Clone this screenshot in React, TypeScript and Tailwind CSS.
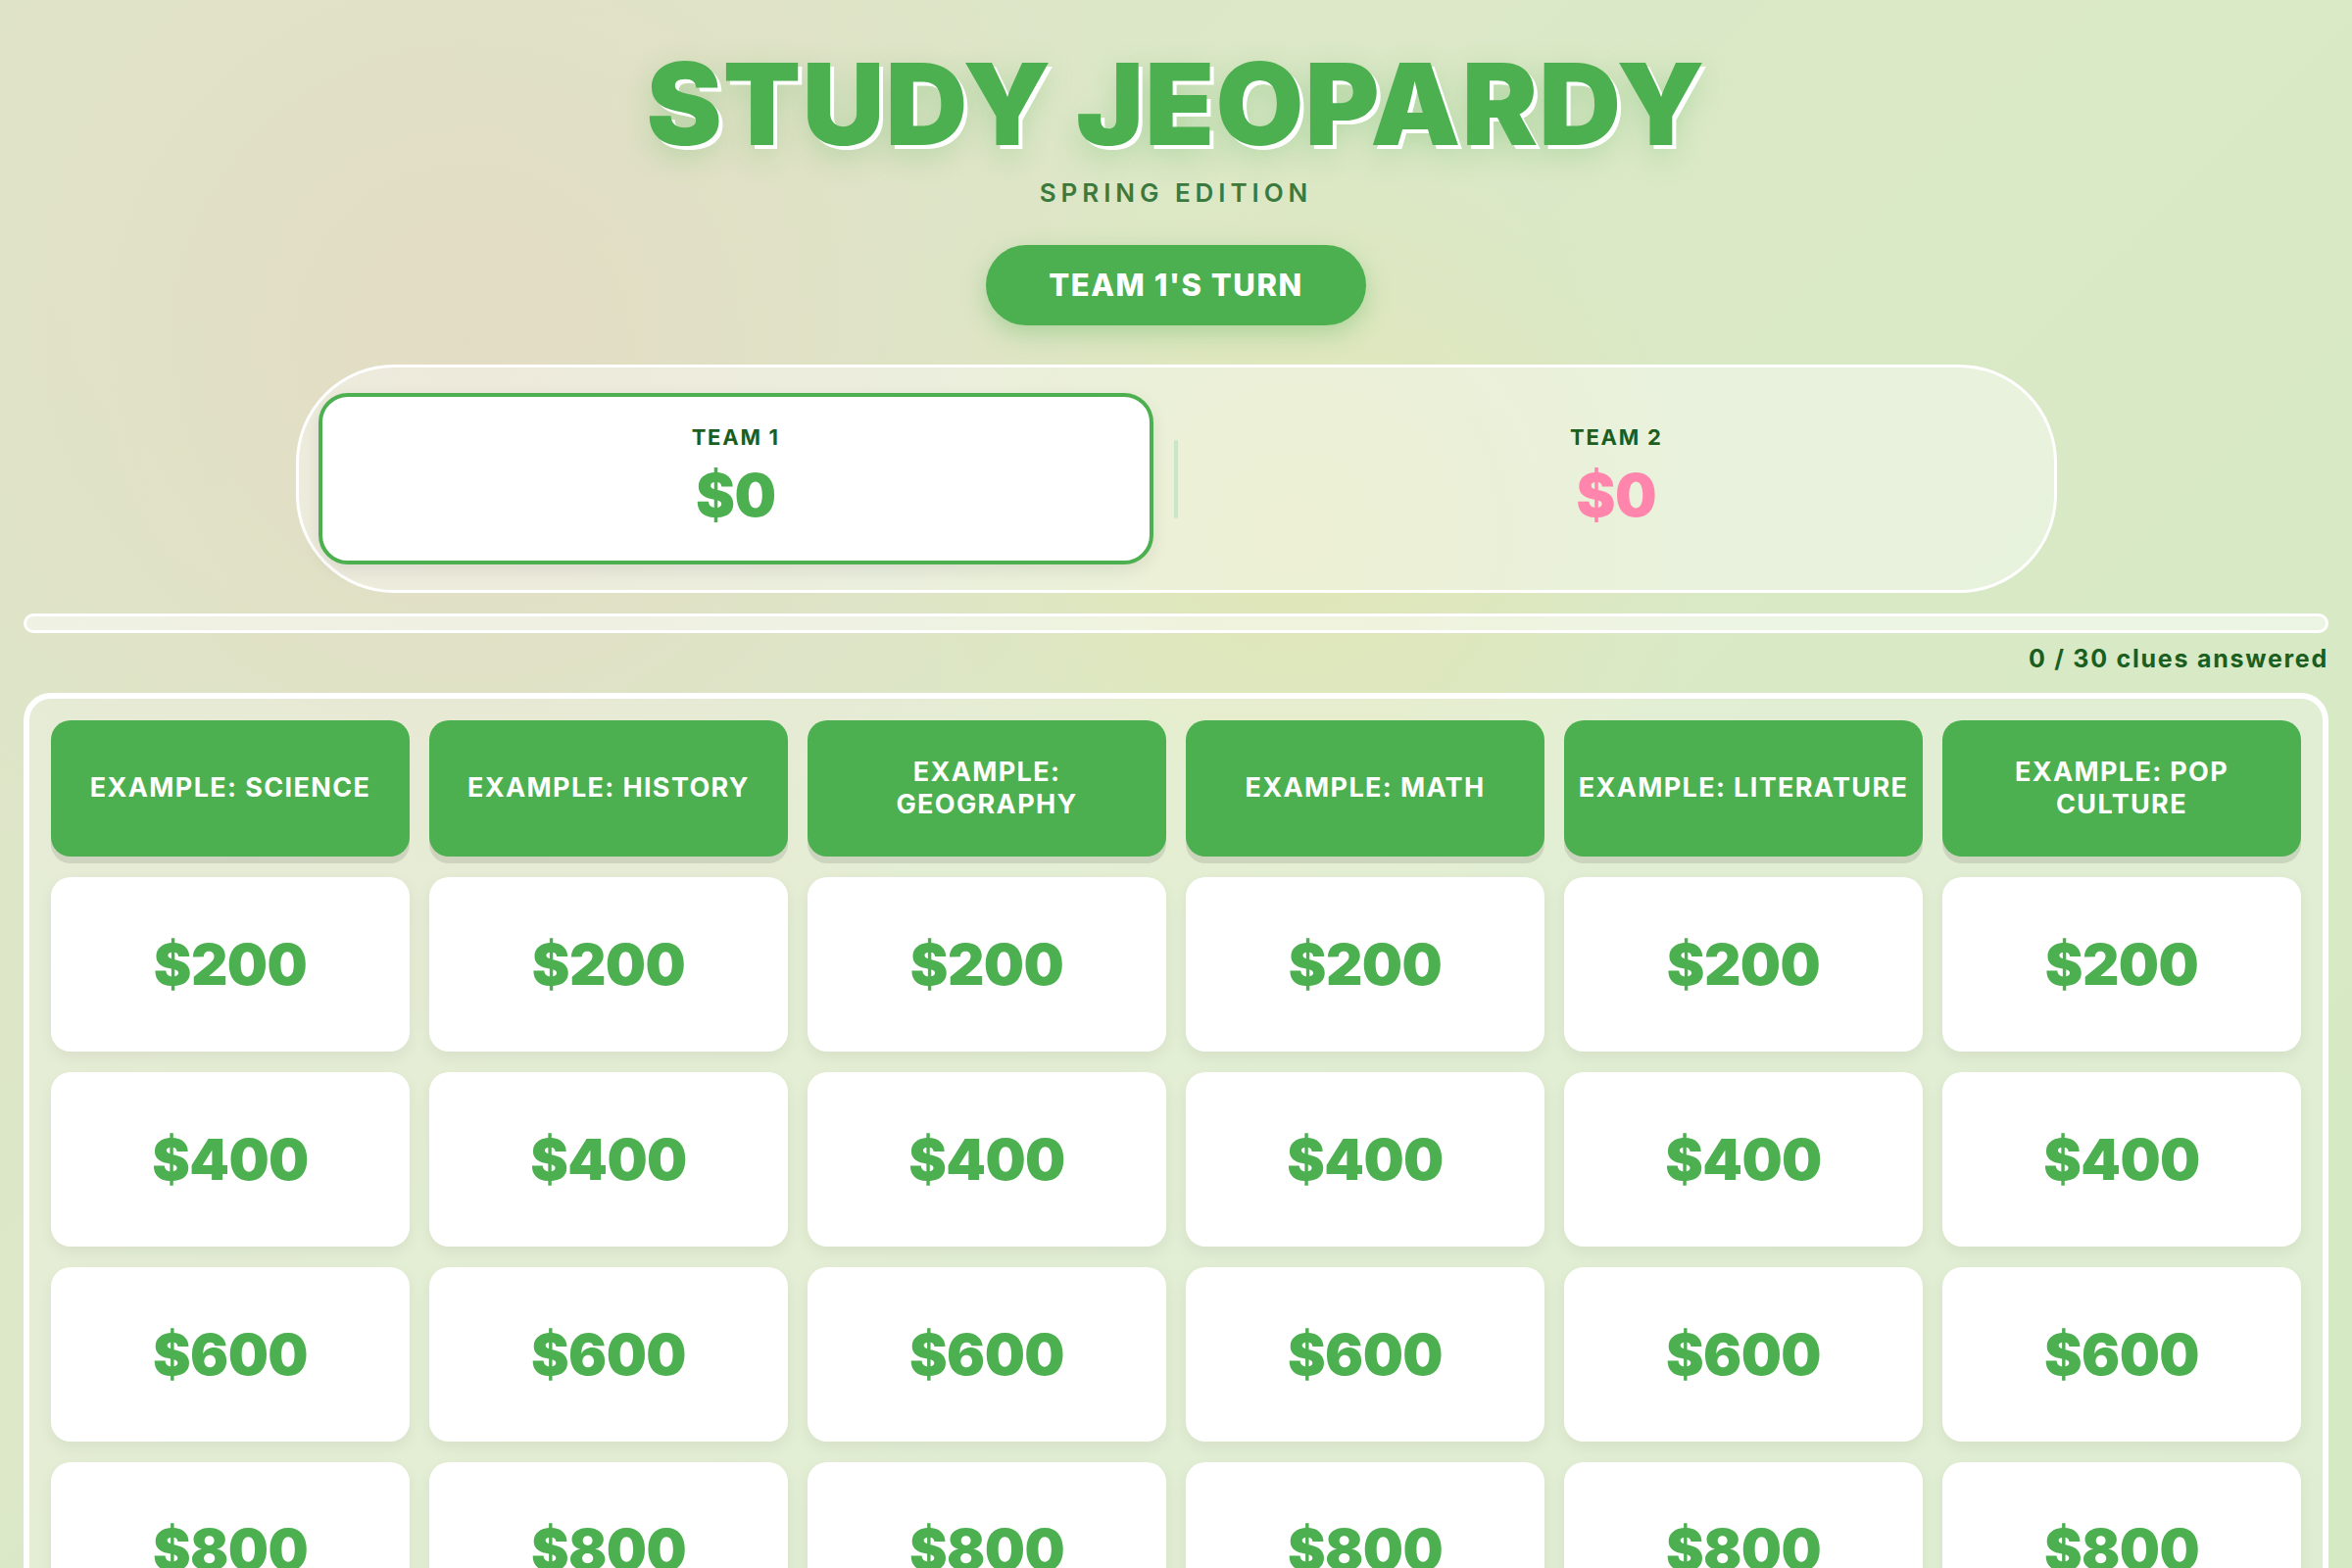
const CATEGORIES = [
  "Example: Science",
  "Example: History",
  "Example:\nGeography",
  "Example: Math",
  "Example: Literature",
  "Example: Pop Culture",
];

const VALUES = [200, 400, 600, 800, 1000];

function TeamScore({ name, score, active, pink }: { name: string; score: number; active?: boolean; pink?: boolean }) {
  return (
    <div
      className={
        "flex h-[175px] flex-1 flex-col items-center justify-center gap-[12px] rounded-[30px] border-4 pb-[6px] " +
        (active ? "border-[#4caf50] bg-white shadow-[0_6px_18px_rgba(0,0,0,0.08)]" : "border-transparent")
      }
    >
      <span className="text-[22px] font-bold uppercase leading-[1.2] tracking-[0.08em] text-[#1b5e20]">{name}</span>
      <span className={"text-[60px] font-black leading-[1.1] tracking-[-0.01em] " + (pink ? "text-[#ff85ad]" : "text-[#4caf50]")}>
        ${score}
      </span>
    </div>
  );
}

export default function App() {
  return (
    <div className="min-h-screen w-full bg-[radial-gradient(circle_at_20%_18%,#e3dcc4_0%,rgba(227,220,196,0)_28%),radial-gradient(circle_at_55%_28%,#e1e6b8_0%,rgba(225,230,184,0)_22%),linear-gradient(135deg,#dfe5c9_0%,#dae9c6_50%,#d4e9c4_100%)] px-6 pb-12 font-['Inter','Noto_Sans',sans-serif]">
      <header className="flex flex-col items-center pt-12">
        <h1 className="text-[116px] font-black leading-none tracking-[0.01em] text-[#4caf50] [text-shadow:4px_4px_0_#ffffff,0_10px_30px_rgba(76,175,80,0.3)]">
          STUDY JEOPARDY
        </h1>
        <p className="mt-5 text-[26px] font-semibold uppercase leading-none tracking-[0.19em] text-[#3b7a3e]">
          Spring Edition
        </p>
        <div className="mt-10 flex h-[82px] items-center rounded-full bg-[#4caf50] px-[64px] text-[31px] font-extrabold uppercase tracking-[0.05em] text-white shadow-[0_8px_24px_rgba(76,175,80,0.35)]">
          Team 1&apos;s Turn
        </div>
      </header>

      <div className="mx-auto mt-10 flex w-[1797px] items-center gap-[21px] rounded-[100px] border-[3px] border-white bg-white/40 px-5 py-[26px]">
        <TeamScore name="Team 1" score={0} active />
        <div className="h-20 w-1 rounded-full bg-[#c8e6c9]" />
        <TeamScore name="Team 2" score={0} pink />
      </div>

      <div className="mt-[21px] h-5 w-full rounded-full border-[3px] border-white bg-white/50" />

      <p className="mt-[10px] text-right text-[25px] font-bold leading-8 tracking-[0.07em] text-[#1b5e20]">
        0 / 30 clues answered
      </p>

      <div className="mt-[19px] rounded-[28px] border-[6px] border-white bg-white/25 p-[22px]">
        <div className="grid grid-cols-6 gap-x-5 gap-y-[21px]">
          {CATEGORIES.map((c) => (
            <div
              key={c}
              className="flex h-[139px] items-center justify-center whitespace-pre-line rounded-[20px] bg-[#4caf50] px-[10px] text-center text-[27px] font-bold uppercase leading-[1.2] tracking-[0.05em] text-white shadow-[0_7px_0_rgba(0,0,0,0.1)]"
            >
              {c}
            </div>
          ))}
          {VALUES.map((v) =>
            CATEGORIES.map((c) => (
              <div
                key={c + v}
                className="flex h-[178px] items-center justify-center rounded-[20px] bg-white text-[58px] font-black tracking-[-0.01em] text-[#4caf50] shadow-[0_6px_16px_rgba(0,0,0,0.06)]"
              >
                ${v}
              </div>
            ))
          )}
        </div>
      </div>
    </div>
  );
}
